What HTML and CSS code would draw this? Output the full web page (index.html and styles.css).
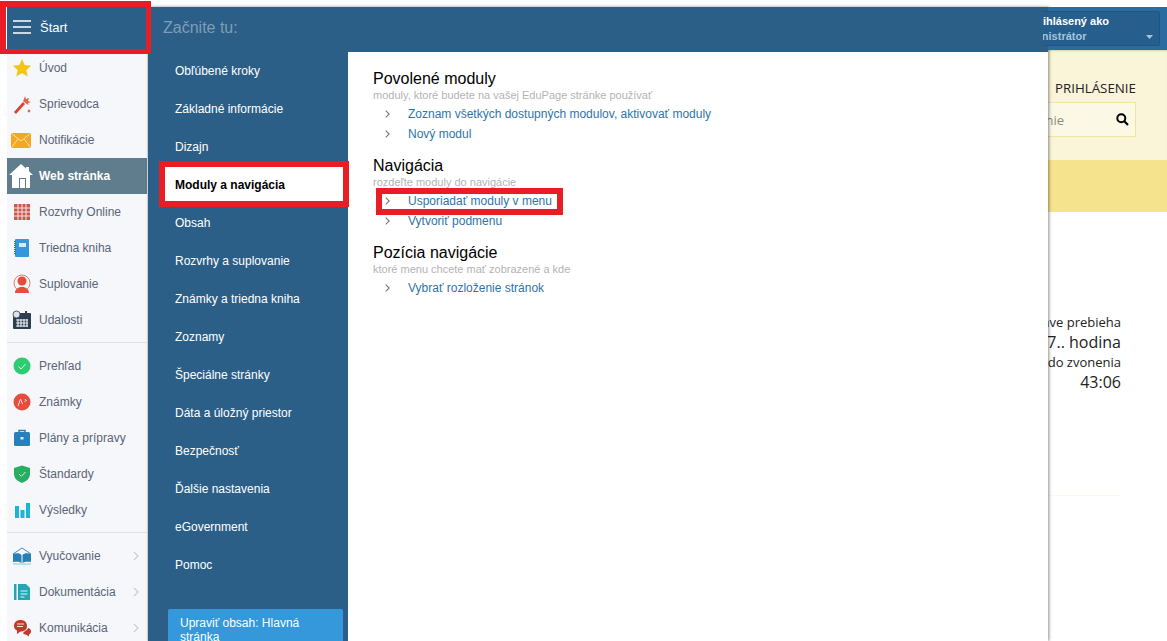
FILE: index.html
```html
<!DOCTYPE html>
<html lang="sk">
<head>
<meta charset="utf-8">
<title>EduPage</title>
<link rel="stylesheet" href="styles.css">
</head>
<body>
<div class="app">
  <aside class="sidebar">
    <div class="start">
      <svg class="burger" width="18" height="14" viewBox="0 0 18 14"><path d="M0 1h18M0 7h18M0 13h18" stroke="#fff" stroke-width="1.5"/></svg>
      <span>Štart</span>
    </div>
    <nav class="side-list">
      <a class="side-item"><svg class="ico" viewBox="0 0 20 20"><path d="M10 1l2.700 6 6.500.7-4.900 4.300 1.400 6.400L10 15.100l-5.700 3.300 1.400-6.400L.8 7.700 7.300 7z" fill="#f4c60f"/></svg>Úvod</a>
      <a class="side-item"><svg class="ico" viewBox="0 0 20 20"><path d="M2 18L11 8l2 2-9 10z" fill="#d9432f"/><path d="M13 2l1 3 3-1-1 3 3 1-3 1 .5 2-2.500-1.500L11 7l1-2z" fill="#e8604c"/><path d="M17 15l.6 1.400 1.400.6-1.400.6L17 19l-.6-1.400L15 17l1.400-.6z" fill="#c0392b"/></svg>Sprievodca</a>
      <a class="side-item"><svg class="ico ico-wide" viewBox="0 0 20 15"><rect width="20" height="15" fill="#f5a623"/><path d="M0 0l10 8 10-8M0 15l7-9M20 15l-7-9" fill="none" stroke="#fde3a8" stroke-width="1"/></svg>Notifikácie</a>
      <a class="side-item current"><svg class="ico-home" viewBox="0 0 26 26"><path d="M13 1L1 12h3v13h18V12h3l-4-3.700V4h-3v1.500z" fill="#fff"/><rect x="11" y="15" width="7" height="10" fill="#5f7d8c"/><rect x="12" y="16" width="5" height="9" fill="#fff"/></svg>Web stránka</a>
      <a class="side-item"><svg class="ico" viewBox="0 0 20 20"><rect x="2" y="2" width="16" height="16" fill="#c9574b"/><path d="M6 2v16M10 2v16M14 2v16M2 6h16M2 10h16M2 14h16" stroke="#f5e6e2" stroke-width="1"/></svg>Rozvrhy Online</a>
      <a class="side-item"><svg class="ico" viewBox="0 0 20 20"><rect x="3" y="1" width="14" height="18" rx="1" fill="#3498db"/><rect x="7" y="5" width="7" height="4" fill="#d6ebf8"/><path d="M3 3v14" stroke="#1f78b4" stroke-width="2" stroke-dasharray="1 1"/></svg>Triedna kniha</a>
      <a class="side-item"><svg class="ico" viewBox="0 0 20 20"><circle cx="10" cy="9" r="8" fill="none" stroke="#e8604c" stroke-width=".8"/><circle cx="10" cy="7" r="4.500" fill="#e74c3c"/><path d="M3 19c0-4 3-5 5-6h4c2 1 5 2 5 6z" fill="#e74c3c"/></svg>Suplovanie</a>
      <a class="side-item"><svg class="ico" viewBox="0 0 20 20"><rect x="1" y="3" width="18" height="16" rx="1" fill="#2c3e50"/><path d="M6 9v8M9 9v8M12 9v8M15 9v8M4 10h12M4 13h12M4 16h12" stroke="#e8ecf0" stroke-width="1.200"/><circle cx="4.500" cy="4.500" r="3.500" fill="#dfe4e8" stroke="#2c3e50" stroke-width=".8"/><rect x="13" y="1" width="2" height="3" fill="#2c3e50"/></svg>Udalosti</a>
      <hr class="side-sep">
      <a class="side-item"><svg class="ico" viewBox="0 0 20 20"><circle cx="10" cy="10" r="8.500" fill="#2ecc71"/><path d="M6.500 10.500l2.500 2.500 4.500-5" fill="none" stroke="#d9f7e5" stroke-width="1"/></svg>Prehľad</a>
      <a class="side-item"><svg class="ico" viewBox="0 0 20 20"><circle cx="10" cy="10" r="8.500" fill="#e74c3c"/><path d="M6 14l2.500-7 2 5M13 7l1 1.500M12.500 9.500l2-1" fill="none" stroke="#fbdcd8" stroke-width="1"/></svg>Známky</a>
      <a class="side-item"><svg class="ico" viewBox="0 0 20 20"><path d="M7 4V2.500h6V4" fill="none" stroke="#2980b9" stroke-width="1.500"/><rect x="2" y="4" width="16" height="14" rx="1.500" fill="#2980b9"/><rect x="8.500" y="9" width="3" height="2.500" fill="#d6ebf8"/></svg>Plány a prípravy</a>
      <a class="side-item"><svg class="ico" viewBox="0 0 20 20"><path d="M10 1.500l8 2.500v6c0 4.500-4 7.500-8 9-4-1.500-8-4.500-8-9V4z" fill="#27ae60"/><path d="M7 10l2.300 2.300L13.500 8" fill="none" stroke="#d9f7e5" stroke-width="1"/></svg>Štandardy</a>
      <a class="side-item"><svg class="ico" viewBox="0 0 20 20"><rect x="3" y="6" width="4" height="12" fill="#17b8d4"/><rect x="8.500" y="10" width="4" height="8" fill="#17b8d4"/><rect x="14" y="3" width="4" height="15" fill="#17b8d4"/></svg>Výsledky</a>
      <hr class="side-sep">
      <a class="side-item"><svg class="ico" viewBox="0 0 20 20"><path d="M1 8l9-6 9 6" fill="none" stroke="#3d8fc9" stroke-width="1"/><path d="M1 8c3-1 7-1 8.500 1v8C8 15.500 4 15.500 1 16z" fill="#2980b9"/><path d="M19 8c-3-1-7-1-8.500 1v8c1.500-1.500 5.500-1.500 8.500-1z" fill="#2980b9"/><path d="M1 18h18" stroke="#8fc1e3" stroke-width="1"/></svg>Vyučovanie<svg class="chev" width="6" height="10" viewBox="0 0 6 10"><path d="M1 1l4 4-4 4" fill="none" stroke="#c9ced6" stroke-width="1.200"/></svg></a>
      <a class="side-item"><svg class="ico" viewBox="0 0 20 20"><rect x="2" y="2" width="2.500" height="16" fill="#26a5b8"/><path d="M6 2h8l4 4v12H6z" fill="#26a5b8"/><path d="M8.500 9h7M8.500 12h7M8.500 15h4" stroke="#e3f5f8" stroke-width="1"/></svg>Dokumentácia<svg class="chev" width="6" height="10" viewBox="0 0 6 10"><path d="M1 1l4 4-4 4" fill="none" stroke="#c9ced6" stroke-width="1.200"/></svg></a>
      <a class="side-item"><svg class="ico" viewBox="0 0 20 20"><path d="M2 8c0-4 3-6 6.500-6S15 4 15 8s-3 5.500-6.500 5.500L5 16v-3.500C3 11.500 2 10 2 8z" fill="#c0392b"/><path d="M5 6h7M5 8.500h6" stroke="#f9dcd8" stroke-width="1"/><path d="M13 13c2-1 3-2 3-3 2 .5 3 1.500 3 3.500 0 1.500-1 2.500-2 3v2l-3-2c-1.500 0-2.500-.5-3-1.500z" fill="#c0392b"/></svg>Komunikácia<svg class="chev" width="6" height="10" viewBox="0 0 6 10"><path d="M1 1l4 4-4 4" fill="none" stroke="#c9ced6" stroke-width="1.200"/></svg></a>
    </nav>
  </aside>

  <section class="panel">
    <header class="panel-head">Začnite tu:</header>
    <div class="panel-body">
      <nav class="cat-nav">
        <a class="cat">Obľúbené kroky</a>
        <a class="cat">Základné informácie</a>
        <a class="cat">Dizajn</a>
        <a class="cat active">Moduly a navigácia</a>
        <a class="cat">Obsah</a>
        <a class="cat">Rozvrhy a suplovanie</a>
        <a class="cat">Známky a triedna kniha</a>
        <a class="cat">Zoznamy</a>
        <a class="cat">Špeciálne stránky</a>
        <a class="cat">Dáta a úložný priestor</a>
        <a class="cat">Bezpečnosť</a>
        <a class="cat">Ďalšie nastavenia</a>
        <a class="cat">eGovernment</a>
        <a class="cat">Pomoc</a>
        <a class="edit-btn">Upraviť obsah: Hlavná stránka</a>
      </nav>
      <main class="content">
        <section class="group">
          <h2>Povolené moduly</h2>
          <p class="hint">moduly, ktoré budete na vašej EduPage stránke používať</p>
          <a class="link"><svg class="arrow" width="5" height="8" viewBox="0 0 5 8"><path d="M.7.7L4.200 4 .7 7.300" fill="none" stroke="#777" stroke-width="1.100"/></svg>Zoznam všetkých dostupných modulov, aktivovať moduly</a>
          <a class="link"><svg class="arrow" width="5" height="8" viewBox="0 0 5 8"><path d="M.7.7L4.200 4 .7 7.300" fill="none" stroke="#777" stroke-width="1.100"/></svg>Nový modul</a>
        </section>
        <section class="group">
          <h2>Navigácia</h2>
          <p class="hint">rozdeľte moduly do navigácie</p>
          <a class="link marked"><svg class="arrow" width="5" height="8" viewBox="0 0 5 8"><path d="M.7.7L4.200 4 .7 7.300" fill="none" stroke="#777" stroke-width="1.100"/></svg>Usporiadať moduly v menu</a>
          <a class="link"><svg class="arrow" width="5" height="8" viewBox="0 0 5 8"><path d="M.7.7L4.200 4 .7 7.300" fill="none" stroke="#777" stroke-width="1.100"/></svg>Vytvoriť podmenu</a>
        </section>
        <section class="group">
          <h2>Pozícia navigácie</h2>
          <p class="hint">ktoré menu chcete mať zobrazené a kde</p>
          <a class="link"><svg class="arrow" width="5" height="8" viewBox="0 0 5 8"><path d="M.7.7L4.200 4 .7 7.300" fill="none" stroke="#777" stroke-width="1.100"/></svg>Vybrať rozloženie stránok</a>
        </section>
      </main>
    </div>
  </section>

  <div class="site">
    <div class="site-bar">
      <div class="user-box">
        <div class="user-text">
          <strong>Prihlásený ako</strong>
          <span>Administrátor</span>
        </div>
        <svg class="caret" width="7" height="4" viewBox="0 0 7 4"><path d="M0 0h7L3.500 4z" fill="#a9c4da"/></svg>
      </div>
    </div>
    <div class="site-top">
      <div class="login">PRIHLÁSENIE</div>
      <div class="search">
        <span>Vyhľadávanie</span>
        <svg class="search-ico" width="13" height="13" viewBox="0 0 13 13"><circle cx="5.300" cy="5.300" r="4" fill="none" stroke="#000" stroke-width="2"/><path d="M8.300 8.300l3.700 3.700" stroke="#000" stroke-width="2.200"/></svg>
      </div>
    </div>
    <div class="site-band"></div>
    <div class="clock">
      <div class="clock-row">Práve prebieha</div>
      <div class="clock-row big">7.. hodina</div>
      <div class="clock-row">Čas do zvonenia</div>
      <div class="clock-row big">43:06</div>
    </div>
    <div class="site-rule"></div>
  </div>
</div>
</body>
</html>
```

FILE: styles.css
```css
* { box-sizing: border-box; }
html, body { margin: 0; height: 641px; overflow: hidden; background: #fff; }
body { font-family: "Liberation Sans", Arial, sans-serif; font-size: 12px; }
a { display: block; text-decoration: none; }

.app { display: flex; height: 634px; margin: 7px 0 0 7px; }

/* left sidebar */
.sidebar { width: 141px; flex: none; background: #f5f7fa; border-right: 1px solid #dfe2e6; }
.start { position: relative; z-index: 3; display: flex; align-items: center; gap: 9px; width: 141px; height: 42px; padding: 0 0 2px 6px; background: #2c5f88; color: #fff; font-size: 13px; }
.start::after { content: ""; position: absolute; top: -6px; left: -7px; right: -3px; bottom: -5px; border: 6px solid #ea1c24; border-right-width: 5px; border-bottom-width: 5px; }
.burger { flex: none; }
.side-list { padding-top: 1px; }
.side-item { display: flex; align-items: center; position: relative; height: 36px; padding-left: 32px; color: #5c6478; }
.ico { position: absolute; left: 5px; top: 8px; width: 20px; height: 20px; }
.ico-wide { top: 10.500px; height: 15px; left: 4px; width: 20px; }
.ico-home { position: absolute; left: 1px; top: 5px; width: 26px; height: 26px; }
.current { background: #5f7d8c; color: #fff; font-weight: 700; }
.side-sep { height: 1px; margin: 4px 0 5px; border: 0; background: #dfe2e6; }
.chev { position: absolute; right: 8px; top: 13px; }

/* panel over the page */
.panel { position: relative; z-index: 2; width: 900px; flex: none; display: flex; flex-direction: column; box-shadow: 1px 0 3px rgba(0, 0, 0, .45); }
.panel-head { height: 45px; padding-left: 15px; background: #2c5f88; color: #7f9db6; font-size: 16px; line-height: 41px; }
.panel-body { flex: 1; display: flex; min-height: 0; }
.cat-nav { display: flex; flex-direction: column; gap: 4px; width: 200px; flex: none; padding-top: 1px; background: #2c5f88; }
.cat { display: flex; align-items: center; flex: none; height: 34px; margin: 0 5px 0 17px; padding: 2px 0 0 10px; color: #fff; }
.cat.active { position: relative; z-index: 3; background: #fff; color: #000; font-weight: 700; }
.cat.active::after { content: ""; position: absolute; inset: -6px; border: 6px solid #ea1c24; }
.edit-btn { flex: none; height: 44px; margin: 24px 5px 0 20px; padding: 7px 12px; background: #3498db; border-radius: 2px; color: #fff; line-height: 14px; }

.content { flex: 1; background: #fff; padding: 17px 0 0 25px; }
.group { margin-bottom: 12px; }
.group h2 { margin: 0; font-size: 16px; font-weight: 400; line-height: 20px; color: #000; }
.hint { margin: 0 0 2px; font-size: 11px; line-height: 13px; color: #b3b3b3; }
.link { position: relative; display: flex; align-items: center; height: 20px; padding-left: 12px; color: #2f74a8; }
.arrow { flex: none; margin-right: 18px; }
.marked { width: 187px; margin-left: 3px; padding-left: 9px; }
.marked::after { content: ""; position: absolute; top: -3px; bottom: -4px; left: 0; right: 0; border: 6px solid #ea1c24; }

/* page under the panel */
.site { flex: 1; min-width: 0; font-family: "Open Sans", sans-serif; color: #222; }
.site-bar { position: relative; z-index: 3; display: flex; justify-content: flex-end; height: 43px; margin-left: -5px; padding: 4px 7px 0 0; overflow: hidden; background: linear-gradient(90deg, #2c5f88 5px, #2a6ba0 5px); }
.user-box { display: flex; justify-content: flex-end; flex: none; width: 170px; height: 35px; padding: 2px 6px 0 0; background: #265f8d; border: 1px solid #21557f; border-radius: 2px; font-family: "Liberation Sans", sans-serif; }
.user-text { display: flex; flex-direction: column; align-items: flex-start; flex: none; margin-right: 37px; font-size: 11px; line-height: 15px; color: #fff; white-space: nowrap; }
.user-text span { margin-left: -17px; color: #a3c4de; font-weight: 700; }
.caret { flex: none; margin-top: 21px; }
.site-top { display: flex; flex-direction: column; align-items: flex-end; height: 110px; padding: 29px 31px 0 0; overflow: hidden; background: #faf4d9; box-shadow: inset 0 2px 2px -1px rgba(0, 0, 0, .15); }
.login { font-size: 13.330px; line-height: 18px; white-space: nowrap; color: #222; }
.search { display: flex; align-items: center; gap: 52px; flex: none; height: 35px; margin-top: 5px; padding: 0 6px 0 10px; background: #fcf8e6; border: 1px solid #f3e3a0; font-size: 13px; color: #8c8c80; white-space: nowrap; }
.search-ico { flex: none; }
.site-band { height: 52px; background: #f5e38d; }
.clock { display: flex; flex-direction: column; align-items: flex-end; padding: 100px 46px 0 0; overflow: hidden; }
.clock-row { flex: none; height: 20px; font-size: 13px; line-height: 20px; white-space: nowrap; }
.clock-row.big { font-size: 16px; }
.site-rule { height: 1px; margin: 103px 46px 0 0; background: #fbf8ec; }
```
